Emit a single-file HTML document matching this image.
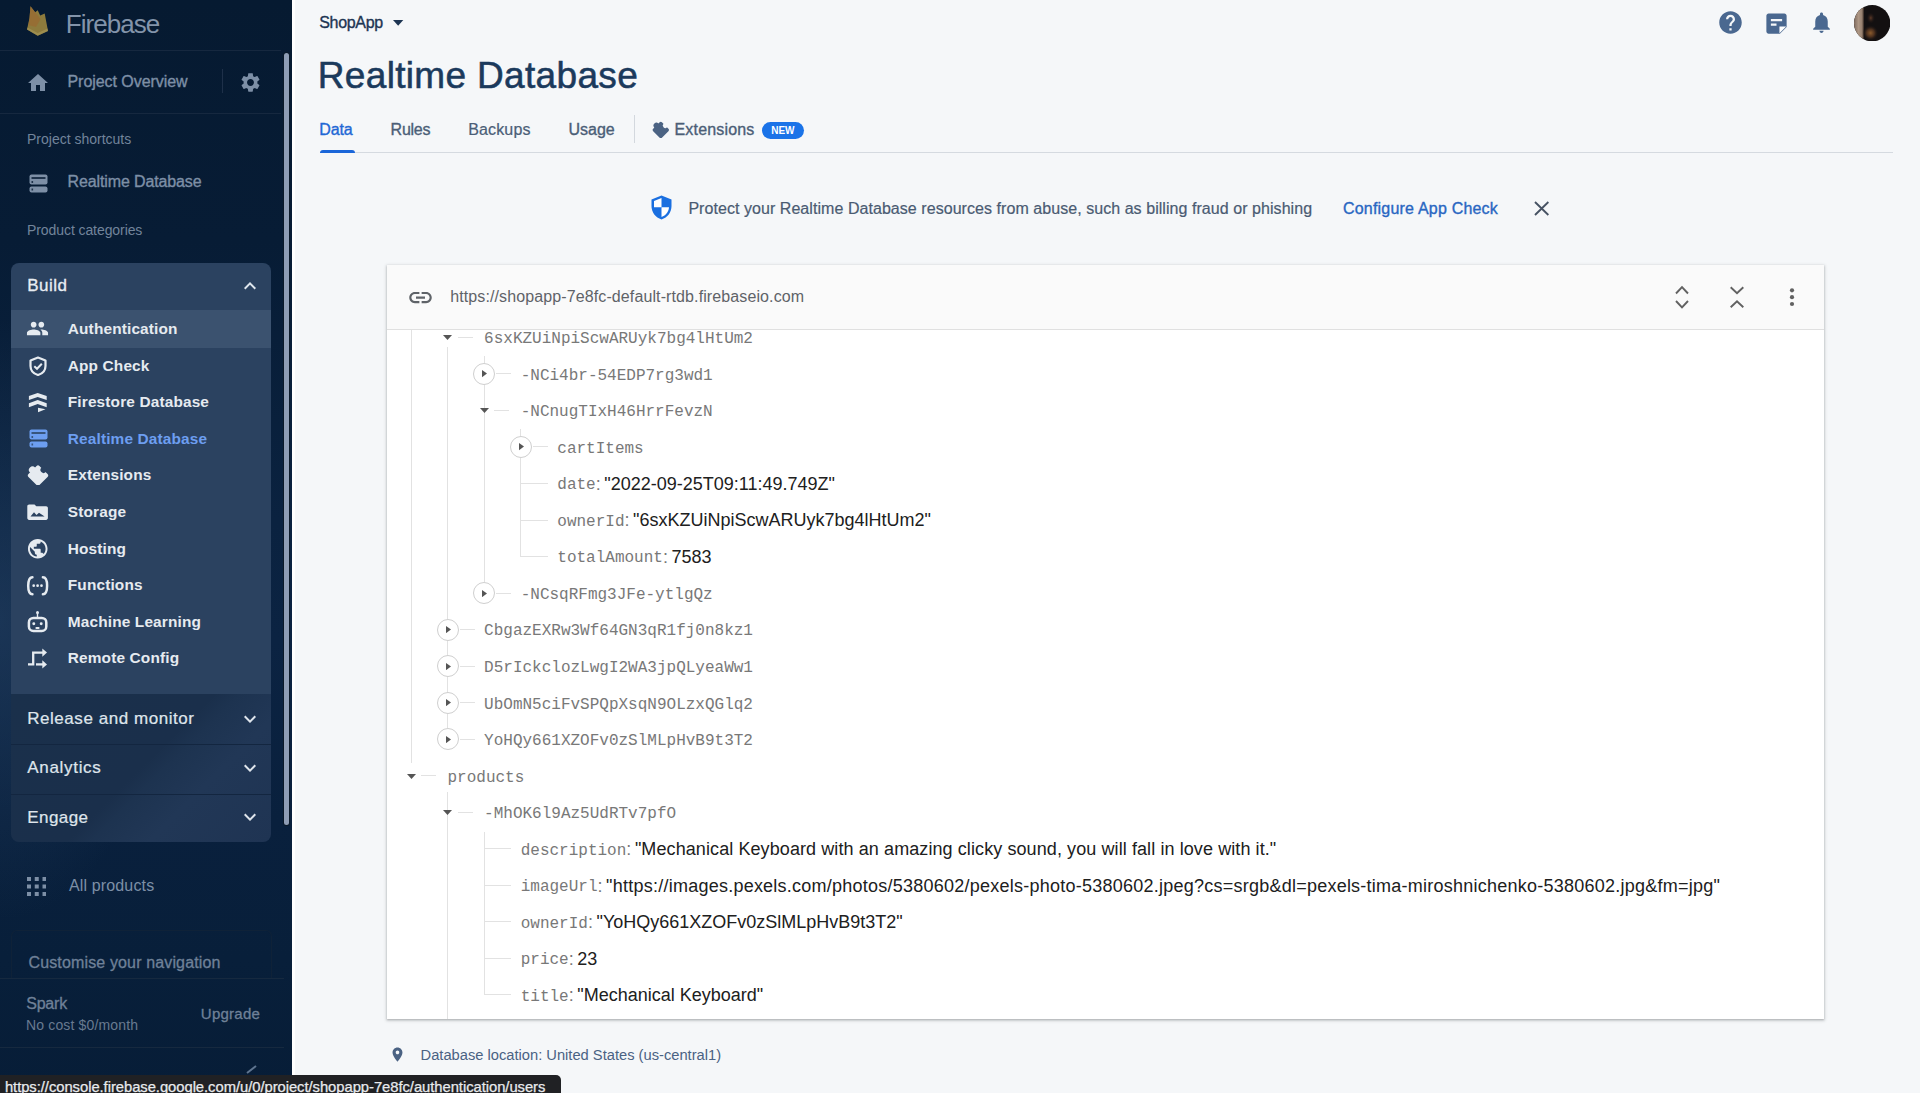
<!DOCTYPE html><html><head><meta charset="utf-8"><title>Realtime Database</title>
<style>
html,body{margin:0;padding:0;width:1920px;height:1093px;overflow:hidden;background:#f5f7f9;}
.t{position:absolute;white-space:pre;}
.b{position:absolute;}
</style></head><body>
<div class="b" style="left:0.00px;top:0.00px;width:291.50px;height:1093.00px;background:linear-gradient(180deg,#061a31 0px,#071c35 240px,#0a2240 520px,#0b2342 640px,#09203d 820px,#081f3a 960px,#071d37 1093px)"></div>
<div class="b" style="left:0.00px;top:0.00px;width:291.50px;height:1093.00px;background:radial-gradient(ellipse 170px 300px at 0px 620px,rgba(45,75,110,0.45),rgba(45,75,110,0) 100%)"></div>
<svg class="b" style="left:26.00px;top:6.00px;" width="23.00" height="31.00" viewBox="0 0 23 31" preserveAspectRatio="none"><path d="M4.5 0.2 L9.2 6.3 L11.7 4.3 L14.2 9.6 L18.7 7.6 L22 24.9 L11.7 29.8 L1 23.6 L3.5 12 Z" fill="#8d7b3d"/><path d="M4.5 0.2 L9.2 6.3 L14.5 13 L10 21 L2.5 19 L3.5 12 Z" fill="#9a6a32" opacity="0.75"/><path d="M1 23.6 L11.7 29.8 L22 24.9 L21.6 22.5 L11.7 27 L1.4 21.5 Z" fill="#a89a5a" opacity="0.6"/></svg>
<div class="t" style="left:65.80px;top:10.50px;font:400 26px/26px 'Liberation Sans', sans-serif;color:#8394aa;letter-spacing:-0.950px;">Firebase</div>
<div class="b" style="left:0.00px;top:50.00px;width:281.00px;height:1.00px;background:#16283f"></div>
<svg class="b" style="left:26.00px;top:71.00px;" width="24.00" height="24.00" viewBox="0 0 24 24" preserveAspectRatio="none"><path d="M10 20v-6h4v6h5v-8h3L12 3 2 12h3v8z" fill="#7d8fa6"/></svg>
<div class="t" style="left:67.50px;top:74.20px;font:400 16px/16px 'Liberation Sans', sans-serif;color:#7d8fa6;letter-spacing:-0.050px;-webkit-text-stroke:0.35px #7d8fa6;">Project Overview</div>
<div class="b" style="left:222.00px;top:69.00px;width:1.00px;height:24.00px;background:#1e3049"></div>
<svg class="b" style="left:238.50px;top:70.50px;" width="23.00" height="23.00" viewBox="0 0 24 24" preserveAspectRatio="none"><path d="M19.14 12.94c.04-.3.06-.61.06-.94 0-.32-.02-.64-.07-.94l2.03-1.58c.18-.14.23-.41.12-.61l-1.92-3.32c-.12-.22-.37-.29-.59-.22l-2.39.96c-.5-.38-1.03-.7-1.62-.94l-.36-2.54c-.04-.24-.24-.41-.48-.41h-3.84c-.24 0-.43.17-.47.41l-.36 2.54c-.59.24-1.13.57-1.62.94l-2.39-.96c-.22-.08-.47 0-.59.22L2.74 8.87c-.12.21-.08.47.12.61l2.03 1.58c-.05.3-.09.63-.09.94s.02.64.07.94l-2.03 1.58c-.18.14-.23.41-.12.61l1.92 3.32c.12.22.37.29.59.22l2.39-.96c.5.38 1.03.7 1.62.94l.36 2.54c.05.24.24.41.48.41h3.84c.24 0 .44-.17.47-.41l.36-2.54c.59-.24 1.13-.56 1.62-.94l2.39.96c.22.08.47 0 .59-.22l1.92-3.32c.12-.22.07-.47-.12-.61l-2.01-1.58zM12 15.6c-1.98 0-3.6-1.62-3.6-3.6s1.62-3.6 3.6-3.6 3.6 1.62 3.6 3.6-1.62 3.6-3.6 3.6z" fill="#7d8fa6"/></svg>
<div class="b" style="left:0.00px;top:113.00px;width:281.00px;height:1.00px;background:#16283f"></div>
<div class="t" style="left:27.00px;top:131.70px;font:400 14px/14px 'Liberation Sans', sans-serif;color:#72849b;">Project shortcuts</div>
<svg class="b" style="left:28.50px;top:173.50px;" width="19.00" height="19.00" viewBox="0 0 19 19" preserveAspectRatio="none"><rect x="0.5" y="0.5" width="18" height="10" rx="2" fill="#7d8fa6"/><rect x="0.5" y="12.5" width="18" height="6" rx="2" fill="#7d8fa6"/><rect x="2.5" y="3" width="14" height="2" fill="#071c35" opacity="0.8"/><rect x="2.5" y="7" width="1.6" height="2" fill="#071c35" opacity="0.8"/><rect x="2.5" y="14.5" width="1.6" height="2" fill="#071c35" opacity="0.8"/></svg>
<div class="t" style="left:67.50px;top:174.40px;font:400 16px/16px 'Liberation Sans', sans-serif;color:#7d8fa6;letter-spacing:-0.120px;-webkit-text-stroke:0.35px #7d8fa6;">Realtime Database</div>
<div class="t" style="left:27.00px;top:222.90px;font:400 14px/14px 'Liberation Sans', sans-serif;color:#72849b;letter-spacing:-0.080px;">Product categories</div>
<div class="b" style="left:10.70px;top:263.00px;width:260.50px;height:430.50px;background:#2b4260;border-radius:8px 8px 0 0"></div>
<div class="t" style="left:27.20px;top:276.85px;font:400 17px/17px 'Liberation Sans', sans-serif;color:#e8edf3;letter-spacing:0.500px;-webkit-text-stroke:0.3px #e8edf3;">Build</div>
<svg class="b" style="left:238.40px;top:273.50px;" width="24.00" height="24.00" viewBox="0 0 24 24" preserveAspectRatio="none"><path d="M12 8l-6 6 1.41 1.41L12 10.83l4.59 4.58L18 14z" fill="#dfe6ee"/></svg>
<div class="b" style="left:10.70px;top:310.00px;width:260.50px;height:38.00px;background:#3b526f"></div>
<div class="t" style="left:67.80px;top:321.01px;font:700 15.4px/15.4px 'Liberation Sans', sans-serif;color:#e6ebf0;letter-spacing:0.150px;">Authentication</div>
<div class="t" style="left:67.80px;top:357.61px;font:700 15.4px/15.4px 'Liberation Sans', sans-serif;color:#e6ebf0;letter-spacing:0.150px;">App Check</div>
<div class="t" style="left:67.80px;top:394.21px;font:700 15.4px/15.4px 'Liberation Sans', sans-serif;color:#e6ebf0;letter-spacing:0.150px;">Firestore Database</div>
<div class="t" style="left:67.80px;top:430.81px;font:700 15.4px/15.4px 'Liberation Sans', sans-serif;color:#6d9ef0;letter-spacing:0.150px;">Realtime Database</div>
<div class="t" style="left:67.80px;top:467.41px;font:700 15.4px/15.4px 'Liberation Sans', sans-serif;color:#e6ebf0;letter-spacing:0.150px;">Extensions</div>
<div class="t" style="left:67.80px;top:504.01px;font:700 15.4px/15.4px 'Liberation Sans', sans-serif;color:#e6ebf0;letter-spacing:0.150px;">Storage</div>
<div class="t" style="left:67.80px;top:540.61px;font:700 15.4px/15.4px 'Liberation Sans', sans-serif;color:#e6ebf0;letter-spacing:0.150px;">Hosting</div>
<div class="t" style="left:67.80px;top:577.21px;font:700 15.4px/15.4px 'Liberation Sans', sans-serif;color:#e6ebf0;letter-spacing:0.150px;">Functions</div>
<div class="t" style="left:67.80px;top:613.81px;font:700 15.4px/15.4px 'Liberation Sans', sans-serif;color:#e6ebf0;letter-spacing:0.150px;">Machine Learning</div>
<div class="t" style="left:67.80px;top:650.41px;font:700 15.4px/15.4px 'Liberation Sans', sans-serif;color:#e6ebf0;letter-spacing:0.150px;">Remote Config</div>
<svg class="b" style="left:26.00px;top:317.00px;" width="23.00" height="23.00" viewBox="0 0 24 24" preserveAspectRatio="none"><path d="M16 11c1.66 0 2.99-1.34 2.99-3S17.66 5 16 5c-1.66 0-3 1.34-3 3s1.34 3 3 3zm-8 0c1.66 0 2.99-1.34 2.99-3S9.66 5 8 5C6.34 5 5 6.34 5 8s1.34 3 3 3zm0 2c-2.33 0-7 1.17-7 3.5V19h14v-2.5c0-2.33-4.67-3.5-7-3.5zm8 0c-.29 0-.62.02-.97.05 1.16.84 1.97 1.97 1.97 3.45V19h6v-2.5c0-2.33-4.67-3.5-7-3.5z" fill="#e6ebf0"/></svg>
<svg class="b" style="left:28.00px;top:356.00px;" width="20.00" height="20.00" viewBox="0 0 20 20" preserveAspectRatio="none"><path d="M10 1.5 L17.5 4.5 V10 C17.5 14.5 14.3 17.8 10 19 C5.7 17.8 2.5 14.5 2.5 10 V4.5 Z" fill="none" stroke="#e6ebf0" stroke-width="2.2" stroke-linejoin="round"/><path d="M6.3 10.2 L9 12.8 L13.8 7.8" fill="none" stroke="#e6ebf0" stroke-width="2"/></svg>
<svg class="b" style="left:26px;top:390px;overflow:visible" width="24" height="24" viewBox="26 390 24 24"><path d="M28.9 396 L37.7 392.9 L46.7 396 L46.7 400 L37.7 397.1 L28.9 400 Z" fill="#e6ebf0"/><path d="M28.9 403.2 L37.7 399.9 L46.7 403.2 L46.7 407.3 L37.7 404.1 L28.9 407.3 Z" fill="#e6ebf0"/><path d="M38 407.8 L45.5 409.2 L38 412.2 Z" fill="#e6ebf0"/></svg>
<svg class="b" style="left:28.50px;top:429.00px;" width="19.00" height="19.00" viewBox="0 0 19 19" preserveAspectRatio="none"><rect x="0.5" y="0.5" width="18" height="10" rx="2" fill="#6d9ef0"/><rect x="0.5" y="12.5" width="18" height="6" rx="2" fill="#6d9ef0"/><rect x="2.5" y="3" width="14" height="2" fill="#2b4260" opacity="0.8"/><rect x="2.5" y="7" width="1.6" height="2" fill="#2b4260" opacity="0.8"/><rect x="2.5" y="14.5" width="1.6" height="2" fill="#2b4260" opacity="0.8"/></svg>
<svg class="b" style="left:26.50px;top:462.50px;" width="22.00" height="22.00" viewBox="0 0 22 22" preserveAspectRatio="none"><g transform="rotate(-45 11 12.5)"><rect x="3.25" y="4.75" width="15.5" height="15.5" rx="2" fill="#e6ebf0"/><circle cx="11" cy="4.75" r="3.6" fill="#e6ebf0"/><circle cx="18.9" cy="12.5" r="3.1" fill="#2b4260"/></g></svg>
<svg class="b" style="left:26px;top:503px;overflow:visible" width="24" height="18" viewBox="26 503 24 18"><path d="M27.3 506.3 C27.3 505.3 28.1 504.5 29.1 504.5 H34.5 L36.3 506.3 H46.1 C47.1 506.3 47.9 507.1 47.9 508.1 V518.1 C47.9 519.1 47.1 519.9 46.1 519.9 H29.1 C28.1 519.9 27.3 519.1 27.3 518.1 Z" fill="#e6ebf0"/><path d="M30.5 516.6 L34 512.3 L36.5 515 L39 512.8 L44.6 516.6 Z" fill="#2b4260"/></svg>
<svg class="b" style="left:26.00px;top:536.50px;" width="23.50" height="23.50" viewBox="0 0 24 24" preserveAspectRatio="none"><path d="M12 2C6.48 2 2 6.48 2 12s4.48 10 10 10 10-4.48 10-10S17.52 2 12 2zm-1 17.93c-3.95-.49-7-3.85-7-7.93 0-.62.08-1.21.21-1.79L9 15v1c0 1.1.9 2 2 2v1.93zm6.9-2.54c-.26-.81-1-1.39-1.9-1.39h-1v-3c0-.55-.45-1-1-1H8v-2h2c.55 0 1-.45 1-1V7h2c1.1 0 2-.9 2-2v-.41c2.93 1.19 5 4.06 5 7.41 0 2.08-.8 3.97-2.1 5.39z" fill="#e6ebf0"/></svg>
<svg class="b" style="left:26px;top:574px;overflow:visible" width="24" height="24" viewBox="26 574 24 24"><path d="M32.4 577.2 C29.6 577.2 28.2 580.5 28.2 585.8 C28.2 591.1 29.6 594.3 32.4 594.3" fill="none" stroke="#e6ebf0" stroke-width="2.5" stroke-linecap="round"/><path d="M42.9 577.2 C45.7 577.2 47.1 580.5 47.1 585.8 C47.1 591.1 45.7 594.3 42.9 594.3" fill="none" stroke="#e6ebf0" stroke-width="2.5" stroke-linecap="round"/><circle cx="33.7" cy="585.7" r="1.35" fill="#e6ebf0"/><circle cx="37.6" cy="585.7" r="1.35" fill="#e6ebf0"/><circle cx="41.5" cy="585.7" r="1.35" fill="#e6ebf0"/></svg>
<svg class="b" style="left:26px;top:609px;overflow:visible" width="24" height="25" viewBox="26 609 24 25"><circle cx="37.5" cy="612.6" r="1.5" fill="#e6ebf0"/><rect x="36.8" y="613" width="1.4" height="4" fill="#e6ebf0"/><rect x="28.9" y="617.9" width="17.4" height="13" rx="4.5" fill="none" stroke="#e6ebf0" stroke-width="2.5"/><circle cx="33.8" cy="623.8" r="1.45" fill="#e6ebf0"/><circle cx="41.2" cy="623.8" r="1.45" fill="#e6ebf0"/><rect x="35.4" y="627" width="4.2" height="2" rx="1" fill="#e6ebf0"/></svg>
<svg class="b" style="left:26px;top:646px;overflow:visible" width="24" height="25" viewBox="26 646 24 25"><path d="M28 664.4 H33.2 V652.6 H43.5" fill="none" stroke="#e6ebf0" stroke-width="2.3"/><path d="M42.3 648.4 L47 652.6 L42.3 656.8 Z" fill="#e6ebf0"/><path d="M36 664.4 H43.5" fill="none" stroke="#e6ebf0" stroke-width="2.3"/><path d="M42.3 660.2 L47 664.4 L42.3 668.6 Z" fill="#e6ebf0"/></svg>
<div class="b" style="left:10.70px;top:693.50px;width:260.50px;height:148.00px;background:linear-gradient(135deg,#1a304b 0%,#1a2f4b 50%,#1d3350 56%,#213756 70%,#1f3453 100%);border-radius:0 0 8px 8px"></div>
<div class="b" style="left:10.70px;top:743.50px;width:260.50px;height:1.20px;background:#132640"></div>
<div class="b" style="left:10.70px;top:793.50px;width:260.50px;height:1.20px;background:#132640"></div>
<div class="t" style="left:27.20px;top:710.15px;font:400 17px/17px 'Liberation Sans', sans-serif;color:#dfe5ec;letter-spacing:0.550px;-webkit-text-stroke:0.22px #dfe5ec;">Release and monitor</div>
<div class="t" style="left:27.20px;top:759.45px;font:400 17px/17px 'Liberation Sans', sans-serif;color:#dfe5ec;letter-spacing:0.700px;-webkit-text-stroke:0.22px #dfe5ec;">Analytics</div>
<div class="t" style="left:27.20px;top:808.75px;font:400 17px/17px 'Liberation Sans', sans-serif;color:#dfe5ec;letter-spacing:0.450px;-webkit-text-stroke:0.22px #dfe5ec;">Engage</div>
<svg class="b" style="left:238.40px;top:707.40px;" width="24.00" height="24.00" viewBox="0 0 24 24" preserveAspectRatio="none"><path d="M16.59 8.59L12 13.17 7.41 8.59 6 10l6 6 6-6z" fill="#dfe5ec"/></svg>
<svg class="b" style="left:238.40px;top:756.40px;" width="24.00" height="24.00" viewBox="0 0 24 24" preserveAspectRatio="none"><path d="M16.59 8.59L12 13.17 7.41 8.59 6 10l6 6 6-6z" fill="#dfe5ec"/></svg>
<svg class="b" style="left:238.40px;top:805.40px;" width="24.00" height="24.00" viewBox="0 0 24 24" preserveAspectRatio="none"><path d="M16.59 8.59L12 13.17 7.41 8.59 6 10l6 6 6-6z" fill="#dfe5ec"/></svg>
<svg class="b" style="left:26.70px;top:876.70px;" width="19.50" height="19.00" viewBox="0 0 19.5 19" preserveAspectRatio="none"><rect x="0.00" y="0.00" width="4" height="4" fill="#7d8fa6"/><rect x="7.75" y="0.00" width="4" height="4" fill="#7d8fa6"/><rect x="15.50" y="0.00" width="4" height="4" fill="#7d8fa6"/><rect x="0.00" y="7.50" width="4" height="4" fill="#7d8fa6"/><rect x="7.75" y="7.50" width="4" height="4" fill="#7d8fa6"/><rect x="15.50" y="7.50" width="4" height="4" fill="#7d8fa6"/><rect x="0.00" y="15.00" width="4" height="4" fill="#7d8fa6"/><rect x="7.75" y="15.00" width="4" height="4" fill="#7d8fa6"/><rect x="15.50" y="15.00" width="4" height="4" fill="#7d8fa6"/></svg>
<div class="t" style="left:68.90px;top:877.50px;font:400 16px/16px 'Liberation Sans', sans-serif;color:#7d8fa6;letter-spacing:0.150px;">All products</div>
<div class="b" style="left:10.50px;top:930.00px;width:261.00px;height:48.00px;border:1px solid #0f2238;border-bottom:none;border-radius:6px 6px 0 0;box-sizing:border-box"></div>
<div class="t" style="left:28.50px;top:955.40px;font:400 16px/16px 'Liberation Sans', sans-serif;color:#6f8198;letter-spacing:0.140px;-webkit-text-stroke:0.3px #6f8198;">Customise your navigation</div>
<div class="b" style="left:0.00px;top:978.00px;width:284.00px;height:1.00px;background:#16293f"></div>
<div class="t" style="left:26.20px;top:996.10px;font:400 16px/16px 'Liberation Sans', sans-serif;color:#6f8198;letter-spacing:-0.200px;-webkit-text-stroke:0.3px #6f8198;">Spark</div>
<div class="t" style="left:26.00px;top:1018.10px;font:400 14px/14px 'Liberation Sans', sans-serif;color:#687a90;letter-spacing:0.150px;">No cost $0/month</div>
<div class="t" style="left:200.80px;top:1006.25px;font:400 15px/15px 'Liberation Sans', sans-serif;color:#6f8198;letter-spacing:0.250px;-webkit-text-stroke:0.3px #6f8198;">Upgrade</div>
<div class="b" style="left:0.00px;top:1046.50px;width:284.00px;height:1.00px;background:#16293f"></div>
<svg class="b" style="left:246.00px;top:1064.00px;" width="12.00" height="10.00" viewBox="0 0 12 10" preserveAspectRatio="none"><path d="M1 9 L10 2" stroke="#5f7590" stroke-width="2"/></svg>
<div class="b" style="left:283.00px;top:52.00px;width:7.20px;height:774.00px;background:#0b1a2a;border-radius:4px"></div>
<div class="b" style="left:284.40px;top:53.00px;width:4.60px;height:772.00px;background:#8e9db5;border-radius:3px"></div>
<div class="b" style="left:291.50px;top:0.00px;width:3.20px;height:1093.00px;background:#ffffff"></div>
<div class="t" style="left:319.20px;top:15.40px;font:400 16px/16px 'Liberation Sans', sans-serif;color:#1d3553;letter-spacing:-0.300px;-webkit-text-stroke:0.35px #1d3553;">ShopApp</div>
<svg class="b" style="left:385.70px;top:10.30px;" width="24.00" height="24.00" viewBox="0 0 24 24" preserveAspectRatio="none"><path d="M7 10l5.15 5.7 5.15-5.7z" fill="#1d3553"/></svg>
<div class="t" style="left:317.80px;top:56.95px;font:400 37px/37px 'Liberation Sans', sans-serif;color:#1b3a5c;letter-spacing:0.330px;-webkit-text-stroke:0.55px #1b3a5c;">Realtime Database</div>
<div class="t" style="left:319.20px;top:121.90px;font:400 16px/16px 'Liberation Sans', sans-serif;color:#1f68d5;letter-spacing:-0.100px;-webkit-text-stroke:0.35px #1f68d5;">Data</div>
<div class="t" style="left:390.60px;top:121.90px;font:400 16px/16px 'Liberation Sans', sans-serif;color:#4b5e77;letter-spacing:-0.250px;-webkit-text-stroke:0.35px #4b5e77;">Rules</div>
<div class="t" style="left:468.20px;top:121.90px;font:400 16px/16px 'Liberation Sans', sans-serif;color:#4b5e77;letter-spacing:0.150px;-webkit-text-stroke:0.22px #4b5e77;">Backups</div>
<div class="t" style="left:568.50px;top:121.90px;font:400 16px/16px 'Liberation Sans', sans-serif;color:#4b5e77;-webkit-text-stroke:0.35px #4b5e77;">Usage</div>
<div class="b" style="left:634.20px;top:115.00px;width:1.00px;height:28.00px;background:#d3d8de"></div>
<svg class="b" style="left:652.40px;top:120.30px;" width="17.60" height="17.60" viewBox="0 0 22 22" preserveAspectRatio="none"><g transform="rotate(-45 11 12.5)"><rect x="3.25" y="4.75" width="15.5" height="15.5" rx="2" fill="#4b6383"/><circle cx="11" cy="4.75" r="3.6" fill="#4b6383"/><circle cx="18.9" cy="12.5" r="3.1" fill="#f5f7f9"/></g></svg>
<div class="t" style="left:674.50px;top:121.90px;font:400 16px/16px 'Liberation Sans', sans-serif;color:#4b5e77;letter-spacing:0.170px;-webkit-text-stroke:0.35px #4b5e77;">Extensions</div>
<div class="b" style="left:761.50px;top:121.70px;width:42.00px;height:17.00px;background:#1a73e8;border-radius:9px"></div>
<div class="t" style="left:771.30px;top:125.70px;font:700 10px/10px 'Liberation Sans', sans-serif;color:#ffffff;letter-spacing:-0.100px;">NEW</div>
<div class="b" style="left:320.00px;top:151.50px;width:1573.00px;height:1.00px;background:#d5dae0"></div>
<div class="b" style="left:320.00px;top:149.50px;width:34.50px;height:3.50px;background:#1a66d9;border-radius:3px 3px 0 0"></div>
<svg class="b" style="left:1716.50px;top:9.20px;" width="27.00" height="27.00" viewBox="0 0 24 24" preserveAspectRatio="none"><path d="M12 2C6.48 2 2 6.48 2 12s4.48 10 10 10 10-4.48 10-10S17.52 2 12 2zm1 17h-2v-2h2v2zm2.07-7.75l-.9.92C13.45 12.9 13 13.5 13 15h-2v-.5c0-1.1.45-2.1 1.17-2.83l1.24-1.26c.37-.36.59-.86.59-1.41 0-1.1-.9-2-2-2s-2 .9-2 2H8c0-2.21 1.79-4 4-4s4 1.79 4 4c0 .88-.36 1.68-.93 2.25z" fill="#4a6890"/></svg>
<svg class="b" style="left:1762.50px;top:9.50px;" width="27.00" height="27.00" viewBox="0 0 24 24" preserveAspectRatio="none"><path d="M19 3H4.99C3.89 3 3 3.9 3 5l.01 14c0 1.1.89 2 1.99 2h10l6-6V5c0-1.1-.9-2-2-2zM7 8h10v2H7V8zm5 6H7v-2h5v2z" fill="#4a6890"/><path d="M14.6 14.6 H20.6 L14.6 20.6 Z" fill="#ffffff"/></svg>
<svg class="b" style="left:1809.00px;top:10.00px;" width="25.00" height="25.00" viewBox="0 0 24 24" preserveAspectRatio="none"><path d="M12 22c1.1 0 2-.9 2-2h-4c0 1.1.89 2 2 2zm6-6v-5c0-3.07-1.64-5.64-4.5-6.32V4c0-.83-.67-1.5-1.5-1.5s-1.5.67-1.5 1.5v.68C7.63 5.36 6 7.92 6 11v5l-2 2v1h16v-1l-2-2z" fill="#4a6890"/></svg>
<svg class="b" style="left:1853.90px;top:4.50px;" width="36.30" height="36.30" viewBox="0 0 36.3 36.3" preserveAspectRatio="none"><defs><clipPath id="av"><circle cx="18.15" cy="18.15" r="18.15"/></clipPath><linearGradient id="avg" x1="0" x2="1" y1="0" y2="0"><stop offset="0" stop-color="#7d6a5e"/><stop offset="0.45" stop-color="#ad9684"/><stop offset="0.8" stop-color="#96806f"/><stop offset="1" stop-color="#2c211c"/></linearGradient><radialGradient id="avb"><stop offset="0" stop-color="#8a5a2c"/><stop offset="0.5" stop-color="#4a2f1e"/><stop offset="1" stop-color="#141011" stop-opacity="0"/></radialGradient><radialGradient id="avh"><stop offset="0" stop-color="#5e3a28"/><stop offset="1" stop-color="#141011" stop-opacity="0"/></radialGradient></defs><g clip-path="url(#av)"><rect width="36.3" height="36.3" fill="#131011"/><rect width="10" height="36.3" fill="url(#avg)"/><ellipse cx="16.8" cy="13" rx="4.5" ry="6" fill="url(#avh)"/><ellipse cx="16.5" cy="28" rx="8" ry="8" fill="url(#avb)"/></g></svg>
<svg class="b" style="left:650.80px;top:195.20px;" width="21.00" height="25.00" viewBox="0 0 21 25" preserveAspectRatio="none"><path d="M10.5 0.5 L20.5 4.5 V11 C20.5 17.5 16.5 22.5 10.5 24.5 C4.5 22.5 0.5 17.5 0.5 11 V4.5 Z" fill="#1a6fe0"/><path d="M10.5 3 L3 6 V12.3 H10.5 Z" fill="#ffffff"/><path d="M10.5 12.3 H18 C17.6 17 14.8 20.6 10.5 22 Z" fill="#ffffff"/></svg>
<div class="t" style="left:688.40px;top:201.00px;font:400 16px/16px 'Liberation Sans', sans-serif;color:#4a5b72;letter-spacing:0.055px;-webkit-text-stroke:0.2px #4a5b72;">Protect your Realtime Database resources from abuse, such as billing fraud or phishing</div>
<div class="t" style="left:1343.00px;top:200.60px;font:400 16px/16px 'Liberation Sans', sans-serif;color:#2866c2;letter-spacing:0.200px;-webkit-text-stroke:0.35px #2866c2;">Configure App Check</div>
<svg class="b" style="left:1533.50px;top:200.70px;" width="15.40" height="15.00" viewBox="0 0 15.4 15" preserveAspectRatio="none"><path d="M1 1 L14.4 14 M14.4 1 L1 14" stroke="#465263" stroke-width="1.9"/></svg>
<div class="b" style="left:387.20px;top:264.90px;width:1437.00px;height:754.10px;background:#ffffff;box-shadow:0 1px 2px rgba(60,64,67,0.3),0 1px 3px 1px rgba(60,64,67,0.15)"></div>
<div class="b" style="left:387.20px;top:264.90px;width:1437.00px;height:65.60px;background:#fafafa;border-bottom:1px solid #e0e0e0;box-sizing:border-box"></div>
<svg class="b" style="left:406.50px;top:283.50px;" width="27.00" height="27.00" viewBox="0 0 24 24" preserveAspectRatio="none"><path d="M3.9 12c0-1.71 1.39-3.1 3.1-3.1h4V7H7c-2.76 0-5 2.24-5 5s2.24 5 5 5h4v-1.9H7c-1.71 0-3.1-1.39-3.1-3.1zM8 13h8v-2H8v2zm9-6h-4v1.9h4c1.71 0 3.1 1.39 3.1 3.1s-1.39 3.1-3.1 3.1h-4V17h4c2.76 0 5-2.24 5-5s-2.24-5-5-5z" fill="#5f6368"/></svg>
<div class="t" style="left:450.20px;top:288.80px;font:400 16px/16px 'Liberation Sans', sans-serif;color:#5f6368;letter-spacing:0.110px;">https://shopapp-7e8fc-default-rtdb.firebaseio.com</div>
<svg class="b" style="left:1660.00px;top:275.00px;" width="44.00" height="44.00" viewBox="0 0 44 44" preserveAspectRatio="none"><path d="M16 18.5 L22 12.2 L28 18.5 M16 26 L22 32.3 L28 26" fill="none" stroke="#616161" stroke-width="1.9"/></svg>
<svg class="b" style="left:1715.00px;top:275.00px;" width="44.00" height="44.00" viewBox="0 0 44 44" preserveAspectRatio="none"><path d="M15.7 12.2 L22 18.2 L28.3 12.2 M15.7 32.3 L22 26.2 L28.3 32.3" fill="none" stroke="#616161" stroke-width="1.9"/></svg>
<svg class="b" style="left:1770.00px;top:275.00px;" width="44.00" height="44.00" viewBox="0 0 44 44" preserveAspectRatio="none"><circle cx="22" cy="15.3" r="2.1" fill="#616161"/><circle cx="22" cy="22.2" r="2.1" fill="#616161"/><circle cx="22" cy="29" r="2.1" fill="#616161"/></svg>
<div class="b" style="left:410.50px;top:330.00px;width:1.00px;height:433.30px;background:#e2e2e2"></div>
<div class="b" style="left:447.10px;top:347.40px;width:1.00px;height:380.83px;background:#e2e2e2"></div>
<div class="b" style="left:483.70px;top:355.93px;width:1.00px;height:226.18px;background:#e2e2e2"></div>
<div class="b" style="left:520.30px;top:428.99px;width:1.00px;height:127.59px;background:#e2e2e2"></div>
<div class="b" style="left:447.10px;top:791.76px;width:1.00px;height:227.24px;background:#e2e2e2"></div>
<div class="b" style="left:483.70px;top:831.82px;width:1.00px;height:163.12px;background:#e2e2e2"></div>
<svg class="b" style="left:443.10px;top:335.20px;" width="9.00" height="5.00" viewBox="0 0 9 5" preserveAspectRatio="none"><path d="M0 0 H9 L4.5 5 Z" fill="#555"/></svg>
<div class="b" style="left:457.60px;top:336.90px;width:15.00px;height:1.00px;background:#e2e2e2"></div>
<div class="t" style="left:484.10px;top:331.24px;font:400 16px/16px 'Liberation Mono', monospace;color:#787878;">6sxKZUiNpiScwARUyk7bg4lHtUm2</div>
<div class="b" style="left:473.20px;top:362.93px;width:22px;height:22px;border:1px solid #cfcfcf;border-radius:50%;box-sizing:border-box;background:#fff"></div>
<svg class="b" style="left:482.40px;top:370.33px;" width="5.00" height="7.20" viewBox="0 0 5 7.2" preserveAspectRatio="none"><path d="M0 0 L5 3.6 L0 7.2 Z" fill="#555"/></svg>
<div class="b" style="left:496.20px;top:373.43px;width:15.00px;height:1.00px;background:#e2e2e2"></div>
<div class="t" style="left:520.70px;top:367.77px;font:400 16px/16px 'Liberation Mono', monospace;color:#787878;">-NCi4br-54EDP7rg3wd1</div>
<svg class="b" style="left:479.70px;top:408.26px;" width="9.00" height="5.00" viewBox="0 0 9 5" preserveAspectRatio="none"><path d="M0 0 H9 L4.5 5 Z" fill="#555"/></svg>
<div class="b" style="left:494.20px;top:409.96px;width:15.00px;height:1.00px;background:#e2e2e2"></div>
<div class="t" style="left:520.70px;top:404.30px;font:400 16px/16px 'Liberation Mono', monospace;color:#787878;">-NCnugTIxH46HrrFevzN</div>
<div class="b" style="left:509.80px;top:435.99px;width:22px;height:22px;border:1px solid #cfcfcf;border-radius:50%;box-sizing:border-box;background:#fff"></div>
<svg class="b" style="left:519.00px;top:443.39px;" width="5.00" height="7.20" viewBox="0 0 5 7.2" preserveAspectRatio="none"><path d="M0 0 L5 3.6 L0 7.2 Z" fill="#555"/></svg>
<div class="b" style="left:532.80px;top:446.49px;width:15.00px;height:1.00px;background:#e2e2e2"></div>
<div class="t" style="left:557.30px;top:440.83px;font:400 16px/16px 'Liberation Mono', monospace;color:#787878;">cartItems</div>
<div class="b" style="left:520.80px;top:483.02px;width:27.00px;height:1.00px;background:#e2e2e2"></div>
<div class="t" style="left:557.30px;top:477.36px;font:400 16px/16px 'Liberation Mono', monospace;color:#787878;">date</div>
<div class="t" style="left:595.70px;top:474.92px;font:400 18px/18px 'Liberation Sans', sans-serif;color:#787878;">:</div>
<div class="t" style="left:604.30px;top:474.92px;font:400 18px/18px 'Liberation Sans', sans-serif;color:#202020;">"2022-09-25T09:11:49.749Z"</div>
<div class="b" style="left:520.80px;top:519.55px;width:27.00px;height:1.00px;background:#e2e2e2"></div>
<div class="t" style="left:557.30px;top:513.89px;font:400 16px/16px 'Liberation Mono', monospace;color:#787878;">ownerId</div>
<div class="t" style="left:624.50px;top:511.45px;font:400 18px/18px 'Liberation Sans', sans-serif;color:#787878;">:</div>
<div class="t" style="left:633.10px;top:511.45px;font:400 18px/18px 'Liberation Sans', sans-serif;color:#202020;">"6sxKZUiNpiScwARUyk7bg4lHtUm2"</div>
<div class="b" style="left:520.80px;top:556.08px;width:27.00px;height:1.00px;background:#e2e2e2"></div>
<div class="t" style="left:557.30px;top:550.42px;font:400 16px/16px 'Liberation Mono', monospace;color:#787878;">totalAmount</div>
<div class="t" style="left:662.90px;top:547.98px;font:400 18px/18px 'Liberation Sans', sans-serif;color:#787878;">:</div>
<div class="t" style="left:671.50px;top:547.98px;font:400 18px/18px 'Liberation Sans', sans-serif;color:#202020;">7583</div>
<div class="b" style="left:473.20px;top:582.11px;width:22px;height:22px;border:1px solid #cfcfcf;border-radius:50%;box-sizing:border-box;background:#fff"></div>
<svg class="b" style="left:482.40px;top:589.51px;" width="5.00" height="7.20" viewBox="0 0 5 7.2" preserveAspectRatio="none"><path d="M0 0 L5 3.6 L0 7.2 Z" fill="#555"/></svg>
<div class="b" style="left:496.20px;top:592.61px;width:15.00px;height:1.00px;background:#e2e2e2"></div>
<div class="t" style="left:520.70px;top:586.95px;font:400 16px/16px 'Liberation Mono', monospace;color:#787878;">-NCsqRFmg3JFe-ytlgQz</div>
<div class="b" style="left:436.60px;top:618.64px;width:22px;height:22px;border:1px solid #cfcfcf;border-radius:50%;box-sizing:border-box;background:#fff"></div>
<svg class="b" style="left:445.80px;top:626.04px;" width="5.00" height="7.20" viewBox="0 0 5 7.2" preserveAspectRatio="none"><path d="M0 0 L5 3.6 L0 7.2 Z" fill="#555"/></svg>
<div class="b" style="left:459.60px;top:629.14px;width:15.00px;height:1.00px;background:#e2e2e2"></div>
<div class="t" style="left:484.10px;top:623.48px;font:400 16px/16px 'Liberation Mono', monospace;color:#787878;">CbgazEXRw3Wf64GN3qR1fj0n8kz1</div>
<div class="b" style="left:436.60px;top:655.17px;width:22px;height:22px;border:1px solid #cfcfcf;border-radius:50%;box-sizing:border-box;background:#fff"></div>
<svg class="b" style="left:445.80px;top:662.57px;" width="5.00" height="7.20" viewBox="0 0 5 7.2" preserveAspectRatio="none"><path d="M0 0 L5 3.6 L0 7.2 Z" fill="#555"/></svg>
<div class="b" style="left:459.60px;top:665.67px;width:15.00px;height:1.00px;background:#e2e2e2"></div>
<div class="t" style="left:484.10px;top:660.01px;font:400 16px/16px 'Liberation Mono', monospace;color:#787878;">D5rIckclozLwgI2WA3jpQLyeaWw1</div>
<div class="b" style="left:436.60px;top:691.70px;width:22px;height:22px;border:1px solid #cfcfcf;border-radius:50%;box-sizing:border-box;background:#fff"></div>
<svg class="b" style="left:445.80px;top:699.10px;" width="5.00" height="7.20" viewBox="0 0 5 7.2" preserveAspectRatio="none"><path d="M0 0 L5 3.6 L0 7.2 Z" fill="#555"/></svg>
<div class="b" style="left:459.60px;top:702.20px;width:15.00px;height:1.00px;background:#e2e2e2"></div>
<div class="t" style="left:484.10px;top:696.54px;font:400 16px/16px 'Liberation Mono', monospace;color:#787878;">UbOmN5ciFvSPQpXsqN9OLzxQGlq2</div>
<div class="b" style="left:436.60px;top:728.23px;width:22px;height:22px;border:1px solid #cfcfcf;border-radius:50%;box-sizing:border-box;background:#fff"></div>
<svg class="b" style="left:445.80px;top:735.63px;" width="5.00" height="7.20" viewBox="0 0 5 7.2" preserveAspectRatio="none"><path d="M0 0 L5 3.6 L0 7.2 Z" fill="#555"/></svg>
<div class="b" style="left:459.60px;top:738.73px;width:15.00px;height:1.00px;background:#e2e2e2"></div>
<div class="t" style="left:484.10px;top:733.07px;font:400 16px/16px 'Liberation Mono', monospace;color:#787878;">YoHQy661XZOFv0zSlMLpHvB9t3T2</div>
<svg class="b" style="left:406.50px;top:773.56px;" width="9.00" height="5.00" viewBox="0 0 9 5" preserveAspectRatio="none"><path d="M0 0 H9 L4.5 5 Z" fill="#555"/></svg>
<div class="b" style="left:421.00px;top:775.26px;width:15.00px;height:1.00px;background:#e2e2e2"></div>
<div class="t" style="left:447.50px;top:769.60px;font:400 16px/16px 'Liberation Mono', monospace;color:#787878;">products</div>
<svg class="b" style="left:443.10px;top:810.09px;" width="9.00" height="5.00" viewBox="0 0 9 5" preserveAspectRatio="none"><path d="M0 0 H9 L4.5 5 Z" fill="#555"/></svg>
<div class="b" style="left:457.60px;top:811.79px;width:15.00px;height:1.00px;background:#e2e2e2"></div>
<div class="t" style="left:484.10px;top:806.13px;font:400 16px/16px 'Liberation Mono', monospace;color:#787878;">-MhOK6l9Az5UdRTv7pfO</div>
<div class="b" style="left:484.20px;top:848.32px;width:27.00px;height:1.00px;background:#e2e2e2"></div>
<div class="t" style="left:520.70px;top:842.66px;font:400 16px/16px 'Liberation Mono', monospace;color:#787878;">description</div>
<div class="t" style="left:626.30px;top:840.22px;font:400 18px/18px 'Liberation Sans', sans-serif;color:#787878;">:</div>
<div class="t" style="left:634.90px;top:840.22px;font:400 18px/18px 'Liberation Sans', sans-serif;color:#202020;letter-spacing:0.090px;">"Mechanical Keyboard with an amazing clicky sound, you will fall in love with it."</div>
<div class="b" style="left:484.20px;top:884.85px;width:27.00px;height:1.00px;background:#e2e2e2"></div>
<div class="t" style="left:520.70px;top:879.19px;font:400 16px/16px 'Liberation Mono', monospace;color:#787878;">imageUrl</div>
<div class="t" style="left:597.50px;top:876.75px;font:400 18px/18px 'Liberation Sans', sans-serif;color:#787878;">:</div>
<div class="t" style="left:606.10px;top:876.75px;font:400 18px/18px 'Liberation Sans', sans-serif;color:#202020;letter-spacing:0.240px;">"https://images.pexels.com/photos/5380602/pexels-photo-5380602.jpeg?cs=srgb&amp;dl=pexels-tima-miroshnichenko-5380602.jpg&amp;fm=jpg"</div>
<div class="b" style="left:484.20px;top:921.38px;width:27.00px;height:1.00px;background:#e2e2e2"></div>
<div class="t" style="left:520.70px;top:915.72px;font:400 16px/16px 'Liberation Mono', monospace;color:#787878;">ownerId</div>
<div class="t" style="left:587.90px;top:913.28px;font:400 18px/18px 'Liberation Sans', sans-serif;color:#787878;">:</div>
<div class="t" style="left:596.50px;top:913.28px;font:400 18px/18px 'Liberation Sans', sans-serif;color:#202020;">"YoHQy661XZOFv0zSlMLpHvB9t3T2"</div>
<div class="b" style="left:484.20px;top:957.91px;width:27.00px;height:1.00px;background:#e2e2e2"></div>
<div class="t" style="left:520.70px;top:952.25px;font:400 16px/16px 'Liberation Mono', monospace;color:#787878;">price</div>
<div class="t" style="left:568.70px;top:949.81px;font:400 18px/18px 'Liberation Sans', sans-serif;color:#787878;">:</div>
<div class="t" style="left:577.30px;top:949.81px;font:400 18px/18px 'Liberation Sans', sans-serif;color:#202020;">23</div>
<div class="b" style="left:484.20px;top:994.44px;width:27.00px;height:1.00px;background:#e2e2e2"></div>
<div class="t" style="left:520.70px;top:988.78px;font:400 16px/16px 'Liberation Mono', monospace;color:#787878;">title</div>
<div class="t" style="left:568.70px;top:986.34px;font:400 18px/18px 'Liberation Sans', sans-serif;color:#787878;">:</div>
<div class="t" style="left:577.30px;top:986.34px;font:400 18px/18px 'Liberation Sans', sans-serif;color:#202020;">"Mechanical Keyboard"</div>
<svg class="b" style="left:388.50px;top:1046.00px;" width="17.00" height="17.00" viewBox="0 0 24 24" preserveAspectRatio="none"><path d="M12 2C8.13 2 5 5.13 5 9c0 5.25 7 13 7 13s7-7.75 7-13c0-3.87-3.13-7-7-7zm0 9.5c-1.38 0-2.5-1.12-2.5-2.5s1.12-2.5 2.5-2.5 2.5 1.12 2.5 2.5-1.12 2.5-2.5 2.5z" fill="#4a6283"/></svg>
<div class="t" style="left:420.60px;top:1047.91px;font:400 14.7px/14.7px 'Liberation Sans', sans-serif;color:#4a6283;">Database location: United States (us-central1)</div>
<div class="b" style="left:0.00px;top:1075.30px;width:560.50px;height:18.00px;background:#202124;border-radius:0 5px 0 0"></div>
<div class="t" style="left:4.90px;top:1079.92px;font:400 14.8px/14.8px 'Liberation Sans', sans-serif;color:#e8eaed;letter-spacing:-0.050px;-webkit-text-stroke:0.25px #e8eaed;">https://console.firebase.google.com/u/0/project/shopapp-7e8fc/authentication/users</div>
</body></html>
